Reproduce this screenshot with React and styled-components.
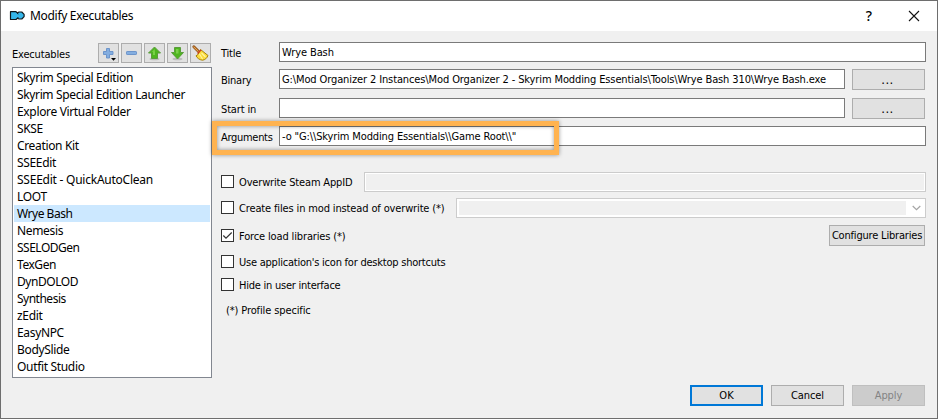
import React from "react";
import styled, { createGlobalStyle } from "styled-components";

const GlobalStyle = createGlobalStyle`
  *, *::before, *::after { box-sizing: border-box; }
  body { margin: 0; overflow: hidden; }
`;

const Dialog = styled.main`
  position: relative;
  width: 938px;
  height: 419px;
  display: flex;
  flex-direction: column;
  border: 1px solid #6e6e6e;
  background: #f0f0f0;
  color: #000;
  font: 11px/14px "DejaVu Sans Condensed", "DejaVu Sans", sans-serif;
  white-space: pre;
`;

const TitleBar = styled.header`
  flex: none;
  height: 30px;
  display: flex;
  align-items: center;
  padding: 0 17px 0 8px;
  background: #fff;
`;

const Caption = styled.h1`
  flex: 1;
  margin: 0 0 0 4px;
  font: 12px/16px "Noto Sans", sans-serif;
  letter-spacing: -0.31px;
`;

const HelpMark = styled.span`
  width: 10px;
  margin-right: 34px;
  text-align: center;
  font: 500 14px/16px "Noto Sans", sans-serif;
`;

const Icon = styled.svg`
  display: block;
  flex: none;
`;

const Body = styled.div`
  flex: 1;
  display: flex;
  padding: 0 11px;
`;

const Sidebar = styled.section`
  width: 200px;
  padding-top: 12px;
`;

const SidebarHead = styled.div`
  display: flex;
  justify-content: space-between;
  height: 24px;
  padding-right: 1px;
`;

const Text = styled.span`
  letter-spacing: ${(p) => p.$track ?? -0.1}px;
`;

const Heading = styled(Text)`
  padding-top: 5px;
`;

const ToolGroup = styled.div`
  display: flex;
  gap: 2px;
`;

const ToolButton = styled.button`
  width: 21px;
  height: 20px;
  padding: 0;
  display: flex;
  align-items: center;
  justify-content: center;
  border: 1px solid #adadad;
  background: #e1e1e1;
`;

const List = styled.ul`
  height: 311px;
  margin: 0;
  padding: 1px 1px 0 1px;
  list-style: none;
  border: 1px solid #828790;
  background: #fff;
  font: 12px/17px "Noto Sans", sans-serif;
`;

const Item = styled.li`
  height: 17px;
  padding-left: 3px;
  letter-spacing: ${(p) => p.$track ?? -0.34}px;
  background: ${(p) => (p.$selected ? "#cce8ff" : "transparent")};
`;

const Form = styled.section`
  flex: 1;
  display: flex;
  flex-direction: column;
  padding: 11px 0 0 9px;
`;

const Field = styled.div`
  display: flex;
  height: 20px;
  margin-bottom: ${(p) => p.$gap}px;
`;

const FieldLabel = styled(Text)`
  width: 58px;
  padding-top: 5px;
`;

const Input = styled.div`
  flex: 1;
  height: 20px;
  padding: 3px 0 0 2px;
  border: 1px solid #7a7a7a;
  background: #fff;
`;

const DisabledInput = styled.div`
  flex: 1;
  height: 20px;
  border: 1px solid #ccc;
  background: #f0f0f0;
  box-shadow: inset 0 0 0 1px #fff;
`;

const DisabledCombo = styled.div`
  flex: 1;
  height: 20px;
  display: flex;
  align-items: center;
  padding-right: 4px;
  border: 1px solid #ccc;
  background: #fff;
`;

const ComboValue = styled.div`
  flex: 1;
  height: 14px;
  margin: 0 6px 0 2px;
  background: #f0f0f0;
`;

const BUTTON_TONES = {
  normal: "border: 1px solid #adadad; background: #e1e1e1; color: #000;",
  primary: "border: 2px solid #0078d7; background: #e1e1e1; color: #000;",
  disabled: "border: 1px solid #bfbfbf; background: #ccc; color: #838383;",
};

const Button = styled.button`
  flex: none;
  display: flex;
  align-items: center;
  justify-content: center;
  width: ${(p) => p.$width ?? 73}px;
  height: 21px;
  padding: ${(p) => (p.$tone === "primary" ? "0" : "1px 0 0")};
  font: inherit;
  white-space: pre;
  ${(p) => BUTTON_TONES[p.$tone ?? "normal"]}
`;

const BrowseButton = styled(Button)`
  margin: 0 1px 0 7px;
  padding: 0 2px 0 0;
  font-size: 13px;
  letter-spacing: 0.4px;
`;

const ConfigureButton = styled(Button)`
  margin: 0 1px 1px 0;
  padding: 0;
`;

const Option = styled.div`
  display: flex;
  align-items: center;
  height: 20px;
  margin-bottom: ${(p) => p.$gap}px;
`;

const CheckBox = styled.span`
  flex: none;
  display: flex;
  align-items: center;
  justify-content: center;
  width: 13px;
  height: 13px;
  margin: 0 5px 1px 0;
  border: 1px solid #333;
  background: #fff;
`;

const OptionText = styled(Text)`
  width: ${(p) => (p.$width ? `${p.$width}px` : "auto")};
  padding-top: 1px;
`;

const Spacer = styled.span`
  flex: 1;
`;

const Note = styled(Text)`
  padding: 3px 0 0 5px;
`;

const Footer = styled.footer`
  display: flex;
  justify-content: flex-end;
  gap: 8px;
  padding: 0 12px 12px 0;
`;

/* Callout frame drawn over the arguments field. */
const Highlight = styled.div`
  position: absolute;
  left: 211px;
  top: 120px;
  width: 347px;
  height: 34px;
  border: 5px solid #ffb350;
  filter: drop-shadow(0 0 2px rgba(0, 0, 0, 0.4));
  pointer-events: none;
`;

const ITEMS = [
  ["Skyrim Special Edition", -0.33],
  ["Skyrim Special Edition Launcher", -0.36],
  ["Explore Virtual Folder"],
  ["SKSE"],
  ["Creation Kit"],
  ["SSEEdit"],
  ["SSEEdit - QuickAutoClean", -0.24],
  ["LOOT"],
  ["Wrye Bash", -0.48],
  ["Nemesis"],
  ["SSELODGen", -0.5],
  ["TexGen", -0.45],
  ["DynDOLOD", -0.45],
  ["Synthesis", -0.5],
  ["zEdit"],
  ["EasyNPC"],
  ["BodySlide"],
  ["Outfit Studio", -0.33],
];

const AppIcon = () => (
  <Icon width="17" height="12" viewBox="0 0 17 12">
    <path
      d="M1.500 1.700H7L8.500 3 10 2h2.800l2.300 2.400v2.200L12.800 9H10L8.500 8.200 7 9.500H1.500z"
      fill="#35b6ea"
      stroke="#10181c"
      strokeWidth="1.200"
      strokeLinejoin="round"
    />
    <path d="M8.300 3l.8 1.300M8.500 8.200l.7-1" stroke="#10181c" />
  </Icon>
);

const CloseIcon = () => (
  <Icon width="12" height="12" viewBox="0 0 12 12">
    <path d="M1 1l10 10M11 1L1 11" stroke="#111" strokeWidth="1.100" />
  </Icon>
);

const PlusIcon = () => (
  <Icon width="19" height="18" viewBox="0 0 19 18">
    <path
      d="M7.500 4.500h3v3h3.500v3h-3.500v3.500h-3v-3.500H4.500v-3h3z"
      fill="#84aee0"
      stroke="#6590c8"
      strokeWidth=".9"
      strokeLinejoin="round"
    />
    <path d="M12 14h5l-2.500 2.700z" fill="#000" />
  </Icon>
);

const MinusIcon = () => (
  <Icon width="19" height="18" viewBox="0 0 19 18">
    <rect x="4.500" y="7.500" width="10" height="3" rx=".6" fill="#84aee0" stroke="#6590c8" strokeWidth=".9" />
  </Icon>
);

const ArrowIcon = ({ down }) => (
  <Icon width="19" height="18" viewBox="0 0 19 18">
    <ellipse cx="9.500" cy="15" rx="5" ry="1.300" fill="#bcbcbc" />
    <path
      d={
        down
          ? "M6.500 3.500h6v5h3l-6 6.500-6-6.500h3z"
          : "M9.500 3l6 6h-3v5.500h-6V9h-3z"
      }
      fill="#4eb51f"
      stroke="#5a9c3c"
      strokeWidth="1"
      strokeLinejoin="round"
    />
    <path
      d={down ? "M8 5h2.500v4.500H8z" : "M9.500 5L7 8h1v3h2V8z"}
      fill="#79d048"
    />
  </Icon>
);

const BroomIcon = () => (
  <Icon width="19" height="18" viewBox="0 0 19 18">
    <path d="M2.800 2.800l4.500 4.500" stroke="#8a4a12" strokeWidth="2.800" strokeLinecap="round" />
    <path d="M2.800 2.800l4.500 4.500" stroke="#e8a552" strokeWidth="1.200" strokeLinecap="round" />
    <path
      d="M9.500 5.500l2.500 2 5 4c-1 2.600-3 4.400-5.500 4.700-3-.3-5.500-2.200-6.500-4.400l2-1.300z"
      fill="#fbdc3c"
      stroke="#a8830c"
      strokeWidth="1"
      strokeLinejoin="round"
    />
    <path d="M8.500 10l3 5M10.500 9l4 4" stroke="#fff3a0" strokeWidth="1.200" />
    <path d="M6.500 9.500L10 6" stroke="#d03a18" strokeWidth="1.200" />
  </Icon>
);

const Tick = () => (
  <Icon width="11" height="11" viewBox="0 0 11 11">
    <path d="M1.300 5.500L4 8.200 9.700 2.500" fill="none" stroke="#333" strokeWidth="1.200" />
  </Icon>
);

const Chevron = () => (
  <Icon width="9" height="6" viewBox="0 0 9 6">
    <path d="M.7 1l3.800 3.700L8.300 1" fill="none" stroke="#a5a5a5" strokeWidth="1.200" />
  </Icon>
);

export default function App() {
  return (
    <>
      <GlobalStyle />
      <Dialog>
        <TitleBar>
          <AppIcon />
          <Caption>Modify Executables</Caption>
          <HelpMark>?</HelpMark>
          <CloseIcon />
        </TitleBar>

        <Body>
          <Sidebar>
            <SidebarHead>
              <Heading $track={-0.17}>Executables</Heading>
              <ToolGroup>
                <ToolButton><PlusIcon /></ToolButton>
                <ToolButton><MinusIcon /></ToolButton>
                <ToolButton><ArrowIcon /></ToolButton>
                <ToolButton><ArrowIcon down /></ToolButton>
                <ToolButton><BroomIcon /></ToolButton>
              </ToolGroup>
            </SidebarHead>
            <List>
              {ITEMS.map(([name, track]) => (
                <Item key={name} $track={track} $selected={name === "Wrye Bash"}>
                  {name}
                </Item>
              ))}
            </List>
          </Sidebar>

          <Form>
            <Field $gap={7}>
              <FieldLabel $track={-0.2}>Title</FieldLabel>
              <Input><Text $track={-0.1}>Wrye Bash</Text></Input>
            </Field>
            <Field $gap={9}>
              <FieldLabel $track={-0.25}>Binary</FieldLabel>
              <Input>
                <Text $track={-0.115}>
                  {"G:\\Mod Organizer 2 Instances\\Mod Organizer 2 - Skyrim Modding Essentials\\Tools\\Wrye Bash 310\\Wrye Bash.exe"}
                </Text>
              </Input>
              <BrowseButton>...</BrowseButton>
            </Field>
            <Field $gap={8}>
              <FieldLabel $track={-0.15}>Start in</FieldLabel>
              <Input />
              <BrowseButton>...</BrowseButton>
            </Field>
            <Field $gap={26}>
              <FieldLabel $track={-0.3}>Arguments</FieldLabel>
              <Input>
                <Text $track={-0.13}>{'-o "G:\\\\Skyrim Modding Essentials\\\\Game Root\\\\"'}</Text>
              </Input>
            </Field>

            <Option $gap={6}>
              <CheckBox />
              <OptionText $track={-0.16} $width={125}>Overwrite Steam AppID</OptionText>
              <DisabledInput />
            </Option>
            <Option $gap={8}>
              <CheckBox />
              <OptionText $track={-0.14} $width={217}>Create files in mod instead of overwrite (*)</OptionText>
              <DisabledCombo>
                <ComboValue />
                <Chevron />
              </DisabledCombo>
            </Option>
            <Option $gap={6}>
              <CheckBox><Tick /></CheckBox>
              <OptionText $track={-0.14}>Force load libraries (*)</OptionText>
              <Spacer />
              <ConfigureButton $width={96}>
                <Text $track={-0.19}>Configure Libraries</Text>
              </ConfigureButton>
            </Option>
            <Option $gap={3}>
              <CheckBox />
              <OptionText $track={-0.23}>Use application's icon for desktop shortcuts</OptionText>
            </Option>
            <Option $gap={6}>
              <CheckBox />
              <OptionText $track={-0.24}>Hide in user interface</OptionText>
            </Option>
            <Note $track={-0.12}>(*) Profile specific</Note>
          </Form>
        </Body>

        <Footer>
          <Button $tone="primary"><Text $track={0}>OK</Text></Button>
          <Button><Text $track={-0.1}>Cancel</Text></Button>
          <Button $tone="disabled"><Text>Apply</Text></Button>
        </Footer>

        <Highlight />
      </Dialog>
    </>
  );
}
